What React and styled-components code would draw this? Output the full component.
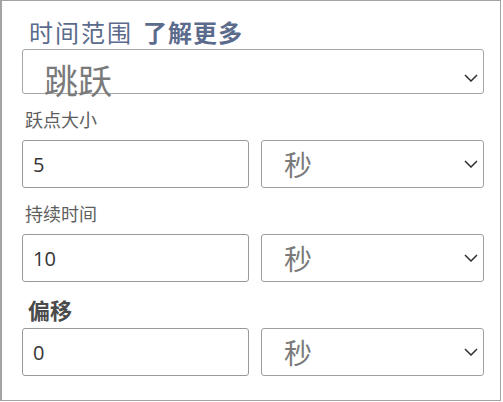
import React from 'react';
import styled, { createGlobalStyle } from 'styled-components';

const GlobalStyle = createGlobalStyle`
  html, body {
    margin: 0;
    padding: 0;
    background: #fff;
  }
  body {
    font-family: "Noto Sans CJK SC", "Noto Sans", sans-serif;
  }
`;

const Panel = styled.div`
  box-sizing: border-box;
  width: 501px;
  height: 401px;
  border: 1px solid #a3a3a3;
  border-left-width: 2px;
  padding: 18px 16px 0 20px;
`;

const Title = styled.div`
  padding-left: 7px;
  font-size: 24px;
  line-height: 26px;
  letter-spacing: 2px;
  color: #5b6b8c;
  white-space: nowrap;
`;

const TitleLink = styled.span`
  font-weight: 600;
  letter-spacing: 1px;
  margin-left: 10px;
`;

const Dropdown = styled.div`
  box-sizing: border-box;
  display: flex;
  width: 100%;
  height: 45px;
  margin-top: 4px;
  padding: 13px 5px 0 21px;
  border: 1px solid #a6a6a6;
  border-radius: 3px;
  overflow: visible;
`;

const DropdownText = styled.span`
  align-self: flex-start;
  font-size: 34px;
  line-height: 34px;
  color: #7a7a7a;
`;

const Chevron = styled.svg`
  align-self: center;
  margin-left: auto;
  flex: none;
`;

const Field = styled.div`
  margin-top: 15px;
`;

const Label = styled.div`
  font-size: ${p => (p.$strong ? '22px' : '18px')};
  line-height: ${p => (p.$strong ? '24px' : '20px')};
  font-weight: ${p => (p.$strong ? 600 : 400)};
  color: ${p => (p.$strong ? '#4a4a4a' : '#5e5e5e')};
  padding-left: ${p => (p.$strong ? '6px' : '3px')};
  margin-bottom: ${p => (p.$strong ? '7px' : '11px')};
`;

const Row = styled.div`
  display: flex;
  gap: 12px;
`;

const NumberInput = styled.input`
  box-sizing: border-box;
  width: 227px;
  height: 48px;
  padding: 0 10px;
  border: 1px solid #9a9a9a;
  border-radius: 3px;
  font-family: "Open Sans", "Noto Sans", sans-serif;
  font-size: 20px;
  color: #333;
  background: #fff;
  outline: none;
`;

const UnitSelect = styled.div`
  box-sizing: border-box;
  display: flex;
  align-items: center;
  width: 223px;
  height: 48px;
  padding: 0 5px 0 22px;
  border: 1px solid #9f9f9f;
  border-radius: 3px;
`;

const UnitText = styled.span`
  font-size: 28px;
  line-height: 28px;
  color: #7a7a7a;
`;

const ChevronIcon = () => (
  <Chevron width="14" height="8" viewBox="0 0 14 8">
    <polyline points="1,1 7,7 13,1" fill="none" stroke="#2f2f2f" strokeWidth="1.5" />
  </Chevron>
);

const fields = [
  { label: '跃点大小', value: '5' },
  { label: '持续时间', value: '10' },
  { label: '偏移', value: '0', strong: true },
];

const App = () => (
  <>
    <GlobalStyle />
    <Panel>
      <Title>
        时间范围<TitleLink>了解更多</TitleLink>
      </Title>
      <Dropdown>
        <DropdownText>跳跃</DropdownText>
        <ChevronIcon />
      </Dropdown>
      {fields.map(f => (
        <Field key={f.label}>
          <Label $strong={f.strong}>{f.label}</Label>
          <Row>
            <NumberInput defaultValue={f.value} />
            <UnitSelect>
              <UnitText>秒</UnitText>
              <ChevronIcon />
            </UnitSelect>
          </Row>
        </Field>
      ))}
    </Panel>
  </>
);

export default App;
